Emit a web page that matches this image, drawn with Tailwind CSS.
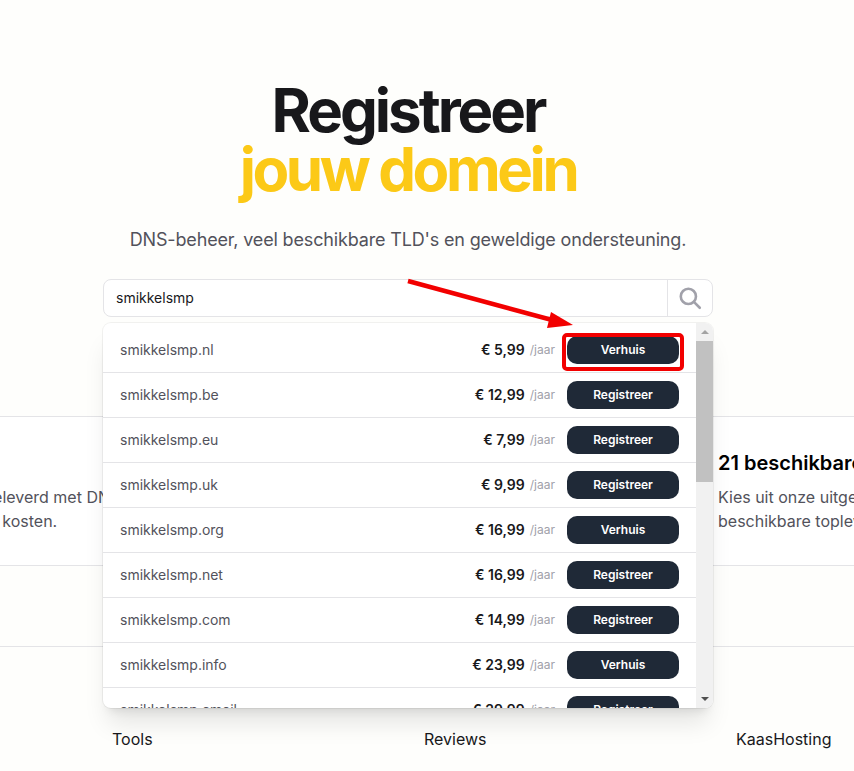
<!DOCTYPE html>
<html lang="en">
<head>
    <meta charset="UTF-8">
    <meta name="viewport" content="width=device-width, initial-scale=1.0">
    <title>Registreer jouw domein</title>
    <script src="https://cdn.jsdelivr.net/npm/@tailwindcss/browser@4"></script>
</head>
<body class="bg-[#fefefc] font-['Inter',sans-serif] h-[771px] overflow-hidden">
    <div class="relative h-[771px] overflow-hidden">
        <!-- hero -->
        <div class="w-[816px] h-[416px] pt-[81px] flex flex-col items-center">
            <h1 class="text-[60px] leading-[59px] font-bold tracking-[-0.05em] text-[#18181b] text-center">
                Registreer<br><span class="text-[#fcc917] tracking-[-0.057em]">jouw domein</span>
            </h1>
            <p class="mt-[27px] text-[18px] leading-[28px] tracking-[-0.16px] text-[#52525b]">DNS-beheer, veel beschikbare TLD's en geweldige ondersteuning.</p>

            <div class="relative mt-[25px] w-[610px]">
                <div class="flex h-[38px] rounded-lg border border-[#e4e4e7] bg-white">
                    <div class="flex-1 pl-[12px] text-[14px] leading-[36px] text-[#18181b]">smikkelsmp</div>
                    <div class="w-[45px] border-l border-[#e4e4e7] flex items-center justify-center">
                        <svg class="w-[26px] h-[26px] text-[#a1a1aa]" fill="none" viewBox="0 0 24 24" stroke="currentColor" stroke-width="2.4" stroke-linecap="round">
                            <circle cx="10.5" cy="10.5" r="7"/>
                            <path d="M15.8 15.8L21 21"/>
                        </svg>
                    </div>
                </div>

                <!-- results dropdown -->
                <div class="absolute z-10 left-0 top-[44px] w-[610px] h-[385px] flex rounded-lg overflow-hidden bg-white shadow-xl ring-1 ring-black/5">
                    <div class="flex-1 pt-[5px] overflow-hidden">
                        <div class="flex items-center h-[45px] pl-[17px] pr-[17px] border-b border-[#e4e4e7]">
                            <span class="flex-1 pb-[2px] text-[14px] text-[#52525b]">smikkelsmp.nl</span>
                            <span class="pb-[2px] text-[14px] font-semibold text-[#18181b]">€ 5,99</span>
                            <span class="ml-[5px] text-[12px] text-[#a1a1aa]">/jaar</span>
                            <button class="ml-[12px] w-[112px] h-[28px] rounded-[10px] bg-[#1f2937] text-white text-[12px] font-semibold">Verhuis</button>
                        </div>
                        <div class="flex items-center h-[45px] pl-[17px] pr-[17px] border-b border-[#e4e4e7]">
                            <span class="flex-1 pb-[2px] text-[14px] text-[#52525b]">smikkelsmp.be</span>
                            <span class="pb-[2px] text-[14px] font-semibold text-[#18181b]">€ 12,99</span>
                            <span class="ml-[5px] text-[12px] text-[#a1a1aa]">/jaar</span>
                            <button class="ml-[12px] w-[112px] h-[28px] rounded-[10px] bg-[#1f2937] text-white text-[12px] font-semibold">Registreer</button>
                        </div>
                        <div class="flex items-center h-[45px] pl-[17px] pr-[17px] border-b border-[#e4e4e7]">
                            <span class="flex-1 pb-[2px] text-[14px] text-[#52525b]">smikkelsmp.eu</span>
                            <span class="pb-[2px] text-[14px] font-semibold text-[#18181b]">€ 7,99</span>
                            <span class="ml-[5px] text-[12px] text-[#a1a1aa]">/jaar</span>
                            <button class="ml-[12px] w-[112px] h-[28px] rounded-[10px] bg-[#1f2937] text-white text-[12px] font-semibold">Registreer</button>
                        </div>
                        <div class="flex items-center h-[45px] pl-[17px] pr-[17px] border-b border-[#e4e4e7]">
                            <span class="flex-1 pb-[2px] text-[14px] text-[#52525b]">smikkelsmp.uk</span>
                            <span class="pb-[2px] text-[14px] font-semibold text-[#18181b]">€ 9,99</span>
                            <span class="ml-[5px] text-[12px] text-[#a1a1aa]">/jaar</span>
                            <button class="ml-[12px] w-[112px] h-[28px] rounded-[10px] bg-[#1f2937] text-white text-[12px] font-semibold">Registreer</button>
                        </div>
                        <div class="flex items-center h-[45px] pl-[17px] pr-[17px] border-b border-[#e4e4e7]">
                            <span class="flex-1 pb-[2px] text-[14px] text-[#52525b]">smikkelsmp.org</span>
                            <span class="pb-[2px] text-[14px] font-semibold text-[#18181b]">€ 16,99</span>
                            <span class="ml-[5px] text-[12px] text-[#a1a1aa]">/jaar</span>
                            <button class="ml-[12px] w-[112px] h-[28px] rounded-[10px] bg-[#1f2937] text-white text-[12px] font-semibold">Verhuis</button>
                        </div>
                        <div class="flex items-center h-[45px] pl-[17px] pr-[17px] border-b border-[#e4e4e7]">
                            <span class="flex-1 pb-[2px] text-[14px] text-[#52525b]">smikkelsmp.net</span>
                            <span class="pb-[2px] text-[14px] font-semibold text-[#18181b]">€ 16,99</span>
                            <span class="ml-[5px] text-[12px] text-[#a1a1aa]">/jaar</span>
                            <button class="ml-[12px] w-[112px] h-[28px] rounded-[10px] bg-[#1f2937] text-white text-[12px] font-semibold">Registreer</button>
                        </div>
                        <div class="flex items-center h-[45px] pl-[17px] pr-[17px] border-b border-[#e4e4e7]">
                            <span class="flex-1 pb-[2px] text-[14px] text-[#52525b]">smikkelsmp.com</span>
                            <span class="pb-[2px] text-[14px] font-semibold text-[#18181b]">€ 14,99</span>
                            <span class="ml-[5px] text-[12px] text-[#a1a1aa]">/jaar</span>
                            <button class="ml-[12px] w-[112px] h-[28px] rounded-[10px] bg-[#1f2937] text-white text-[12px] font-semibold">Registreer</button>
                        </div>
                        <div class="flex items-center h-[45px] pl-[17px] pr-[17px] border-b border-[#e4e4e7]">
                            <span class="flex-1 pb-[2px] text-[14px] text-[#52525b]">smikkelsmp.info</span>
                            <span class="pb-[2px] text-[14px] font-semibold text-[#18181b]">€ 23,99</span>
                            <span class="ml-[5px] text-[12px] text-[#a1a1aa]">/jaar</span>
                            <button class="ml-[12px] w-[112px] h-[28px] rounded-[10px] bg-[#1f2937] text-white text-[12px] font-semibold">Verhuis</button>
                        </div>
                        <div class="flex items-center h-[45px] pl-[17px] pr-[17px] border-b border-[#e4e4e7]">
                            <span class="flex-1 pb-[2px] text-[14px] text-[#52525b]">smikkelsmp.email</span>
                            <span class="pb-[2px] text-[14px] font-semibold text-[#18181b]">€ 29,99</span>
                            <span class="ml-[5px] text-[12px] text-[#a1a1aa]">/jaar</span>
                            <button class="ml-[12px] w-[112px] h-[28px] rounded-[10px] bg-[#1f2937] text-white text-[12px] font-semibold">Registreer</button>
                        </div>
                    </div>
                    <!-- scrollbar -->
                    <div class="w-[17px] bg-[#f1f1f1] flex flex-col items-center">
                        <div class="h-[18px] flex items-center justify-center">
                            <div class="w-0 h-0 border-x-[4px] border-x-transparent border-b-[4px] border-b-[#a3a3a3]"></div>
                        </div>
                        <div class="w-full h-[141px] bg-[#c1c1c1]"></div>
                        <div class="flex-1"></div>
                        <div class="h-[18px] flex items-center justify-center">
                            <div class="w-0 h-0 border-x-[4px] border-x-transparent border-t-[4px] border-t-[#505050]"></div>
                        </div>
                    </div>
                </div>
            </div>
        </div>

        <!-- features -->
        <div class="h-[150px] bg-white border-y border-[#e4e4e7] flex">
            <div class="w-[718px] shrink-0 pt-[32px] overflow-hidden">
                <div class="-ml-[152px] whitespace-nowrap">
                    <div class="text-[20px] leading-[28px] font-semibold text-black">DNS-beheer</div>
                    <p class="mt-[8px] text-[16px] leading-[24px] text-[#52525b]">Elk domein wordt geleverd met DNS-beheer<br>zonder enkele extra kosten.</p>
                </div>
            </div>
            <div class="pt-[32px] whitespace-nowrap">
                <div class="text-[20px] leading-[28px] font-semibold text-black">21 beschikbare TLD's</div>
                <p class="mt-[8px] text-[16px] leading-[24px] text-[#52525b]">Kies uit onze uitgebreide lijst met<br>beschikbare topleveldomeinen.</p>
            </div>
        </div>

        <div class="h-[81px] border-b border-[#e4e4e7]"></div>

        <!-- footer links -->
        <div class="flex pt-[80px] pl-[112px] text-[16px] leading-[24px] text-[#18181b]">
            <a class="w-[312px]">Tools</a>
            <a class="w-[312px]">Reviews</a>
            <a class="whitespace-nowrap">KaasHosting</a>
        </div>

        <!-- annotation: red highlight and arrow -->
        <div class="absolute z-20 left-[562px] top-[333px] w-[122px] h-[38px] border-[4px] border-[#f20000] rounded-[5px]"></div>
        <svg class="absolute z-20 left-0 top-0" width="854" height="771" viewBox="0 0 854 771">
            <path d="M408 281L552 320" stroke="#f20000" stroke-width="4.5" fill="none"/>
            <path d="M573 325L547 328L551 312Z" fill="#f20000"/>
        </svg>
    </div>
</body>
</html>
